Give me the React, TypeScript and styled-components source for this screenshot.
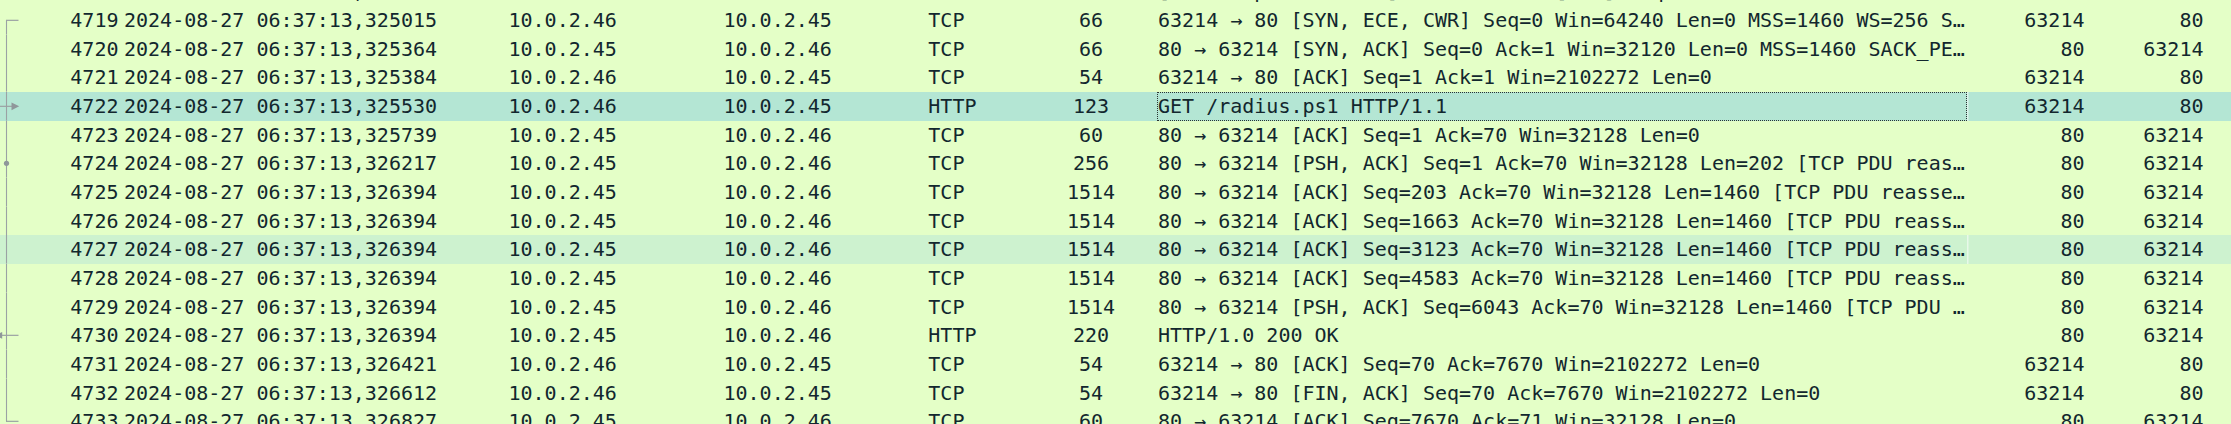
import React from "react";
import styled, { createGlobalStyle, css } from "styled-components";

type Mark = "none" | "start" | "line" | "request" | "related" | "response" | "end";

type Packet = {
  no: number;
  time: string;
  src: string;
  dst: string;
  proto: string;
  len: number;
  info: string;
  sport: number;
  dport: number;
  mark: Mark;
  state?: "selected" | "hover";
};

const ROW_H = 28.667;
const MID = ROW_H / 2;

const packets: Packet[] = [
  { no: 4718, time: "2024-08-27 06:37:13,324911", src: "10.0.2.46", dst: "10.0.2.45", proto: "TCP", len: 54, info: "[TCP Keep-Alive ACK] 63201 → 445 [ACK] Seq=1 Ack=1 Win=1024 Len=0", sport: 63201, dport: 445, mark: "none" },
  { no: 4719, time: "2024-08-27 06:37:13,325015", src: "10.0.2.46", dst: "10.0.2.45", proto: "TCP", len: 66, info: "63214 → 80 [SYN, ECE, CWR] Seq=0 Win=64240 Len=0 MSS=1460 WS=256 S…", sport: 63214, dport: 80, mark: "start" },
  { no: 4720, time: "2024-08-27 06:37:13,325364", src: "10.0.2.45", dst: "10.0.2.46", proto: "TCP", len: 66, info: "80 → 63214 [SYN, ACK] Seq=0 Ack=1 Win=32120 Len=0 MSS=1460 SACK_PE…", sport: 80, dport: 63214, mark: "line" },
  { no: 4721, time: "2024-08-27 06:37:13,325384", src: "10.0.2.46", dst: "10.0.2.45", proto: "TCP", len: 54, info: "63214 → 80 [ACK] Seq=1 Ack=1 Win=2102272 Len=0", sport: 63214, dport: 80, mark: "line" },
  { no: 4722, time: "2024-08-27 06:37:13,325530", src: "10.0.2.46", dst: "10.0.2.45", proto: "HTTP", len: 123, info: "GET /radius.ps1 HTTP/1.1", sport: 63214, dport: 80, mark: "request", state: "selected" },
  { no: 4723, time: "2024-08-27 06:37:13,325739", src: "10.0.2.45", dst: "10.0.2.46", proto: "TCP", len: 60, info: "80 → 63214 [ACK] Seq=1 Ack=70 Win=32128 Len=0", sport: 80, dport: 63214, mark: "line" },
  { no: 4724, time: "2024-08-27 06:37:13,326217", src: "10.0.2.45", dst: "10.0.2.46", proto: "TCP", len: 256, info: "80 → 63214 [PSH, ACK] Seq=1 Ack=70 Win=32128 Len=202 [TCP PDU reas…", sport: 80, dport: 63214, mark: "related" },
  { no: 4725, time: "2024-08-27 06:37:13,326394", src: "10.0.2.45", dst: "10.0.2.46", proto: "TCP", len: 1514, info: "80 → 63214 [ACK] Seq=203 Ack=70 Win=32128 Len=1460 [TCP PDU reasse…", sport: 80, dport: 63214, mark: "line" },
  { no: 4726, time: "2024-08-27 06:37:13,326394", src: "10.0.2.45", dst: "10.0.2.46", proto: "TCP", len: 1514, info: "80 → 63214 [ACK] Seq=1663 Ack=70 Win=32128 Len=1460 [TCP PDU reass…", sport: 80, dport: 63214, mark: "line" },
  { no: 4727, time: "2024-08-27 06:37:13,326394", src: "10.0.2.45", dst: "10.0.2.46", proto: "TCP", len: 1514, info: "80 → 63214 [ACK] Seq=3123 Ack=70 Win=32128 Len=1460 [TCP PDU reass…", sport: 80, dport: 63214, mark: "line", state: "hover" },
  { no: 4728, time: "2024-08-27 06:37:13,326394", src: "10.0.2.45", dst: "10.0.2.46", proto: "TCP", len: 1514, info: "80 → 63214 [ACK] Seq=4583 Ack=70 Win=32128 Len=1460 [TCP PDU reass…", sport: 80, dport: 63214, mark: "line" },
  { no: 4729, time: "2024-08-27 06:37:13,326394", src: "10.0.2.45", dst: "10.0.2.46", proto: "TCP", len: 1514, info: "80 → 63214 [PSH, ACK] Seq=6043 Ack=70 Win=32128 Len=1460 [TCP PDU …", sport: 80, dport: 63214, mark: "line" },
  { no: 4730, time: "2024-08-27 06:37:13,326394", src: "10.0.2.45", dst: "10.0.2.46", proto: "HTTP", len: 220, info: "HTTP/1.0 200 OK", sport: 80, dport: 63214, mark: "response" },
  { no: 4731, time: "2024-08-27 06:37:13,326421", src: "10.0.2.46", dst: "10.0.2.45", proto: "TCP", len: 54, info: "63214 → 80 [ACK] Seq=70 Ack=7670 Win=2102272 Len=0", sport: 63214, dport: 80, mark: "line" },
  { no: 4732, time: "2024-08-27 06:37:13,326612", src: "10.0.2.46", dst: "10.0.2.45", proto: "TCP", len: 54, info: "63214 → 80 [FIN, ACK] Seq=70 Ack=7670 Win=2102272 Len=0", sport: 63214, dport: 80, mark: "line" },
  { no: 4733, time: "2024-08-27 06:37:13,326827", src: "10.0.2.45", dst: "10.0.2.46", proto: "TCP", len: 60, info: "80 → 63214 [ACK] Seq=7670 Ack=71 Win=32128 Len=0", sport: 80, dport: 63214, mark: "end" },
];

const GlobalStyle = createGlobalStyle`
  html, body {
    margin: 0;
    padding: 0;
    background: #e4ffc7;
    overflow: hidden;
  }
`;

const PacketList = styled.div`
  margin-top: -22.667px;
  font-family: "DejaVu Sans Mono", "Liberation Mono", monospace;
  font-size: 20px;
  color: #12272e;
`;

const Row = styled.div<{ $state?: "selected" | "hover" }>`
  display: grid;
  grid-template-columns: 121px 385px 215px 204px 100px 132px 810px 120px 119px 1fr;
  height: ${ROW_H}px;
  line-height: ${ROW_H}px;
  white-space: nowrap;
  background: ${(p) =>
    p.$state === "selected" ? "#b4e6d4" : p.$state === "hover" ? "#cdf2cf" : "#e4ffc7"};
`;

const Cell = styled.div<{ $align?: "left" | "right" | "center"; $pad?: number }>`
  overflow: hidden;
  text-align: ${(p) => p.$align ?? "left"};
  padding-left: ${(p) => (p.$align === "right" ? 0 : p.$pad ?? 0)}px;
  padding-right: ${(p) => (p.$align === "right" ? p.$pad ?? 0 : 0)}px;
`;

const NoCell = styled.div`
  display: flex;
  align-items: stretch;
  padding-right: 2.5px;
`;

const NoText = styled.span`
  flex: 1;
  text-align: right;
`;

const InfoCell = styled.div<{ $focus?: boolean; $split?: boolean }>`
  overflow: hidden;
  border: 1px dotted transparent;
  border-right-width: 0;
  line-height: ${ROW_H - 2}px;
  ${(p) =>
    p.$focus &&
    css`
      border: 1px dotted #2b3433;
      border-bottom-width: 1px;
    `}
  ${(p) =>
    p.$split &&
    css`
      box-shadow: 1.5px 0 0 rgba(255, 255, 255, 0.55);
    `}
`;

const Gutter = styled.svg`
  flex: none;
  display: block;
  width: 20px;
  height: ${ROW_H}px;
  overflow: hidden;
`;

const LINE = "#9ba2a4";

function Relation({ mark }: { mark: Mark }) {
  if (mark === "none") return <Gutter viewBox={`0 0 20 ${ROW_H}`} />;
  const top = mark === "start" ? MID : 0;
  const bottom = mark === "end" ? MID : ROW_H;
  return (
    <Gutter viewBox={`0 0 20 ${ROW_H}`}>
      <line x1={6.5} y1={top} x2={6.5} y2={bottom} stroke={LINE} strokeWidth={1.1} />
      {(mark === "start" || mark === "end") && (
        <line x1={6} y1={MID} x2={18.5} y2={MID} stroke={LINE} strokeWidth={1.2} />
      )}
      {mark === "request" && (
        <>
          <line x1={0} y1={MID} x2={12} y2={MID} stroke={LINE} strokeWidth={1.2} />
          <polygon points={`11.5,${MID - 3.8} 19.2,${MID} 11.5,${MID + 3.8}`} fill="#8f979a" />
        </>
      )}
      {mark === "related" && <circle cx={6.5} cy={MID} r={2.6} fill="#8f979a" />}
      {mark === "response" && (
        <>
          <line x1={0} y1={MID} x2={18.5} y2={MID} stroke={LINE} strokeWidth={1.2} />
          <polygon points={`-5,${MID} 2.2,${MID - 3.4} 2.2,${MID + 3.4}`} fill="#8f979a" />
        </>
      )}
    </Gutter>
  );
}

export default function App() {
  return (
    <>
      <GlobalStyle />
      <PacketList>
        {packets.map((p) => (
          <Row key={p.no} $state={p.state}>
            <NoCell>
              <Relation mark={p.mark} />
              <NoText>{p.no}</NoText>
            </NoCell>
            <Cell $pad={3}>{p.time}</Cell>
            <Cell $pad={2.5}>{p.src}</Cell>
            <Cell $pad={2.5}>{p.dst}</Cell>
            <Cell $pad={3.3}>{p.proto}</Cell>
            <Cell $align="center">{p.len}</Cell>
            <InfoCell $focus={p.state === "selected"} $split={!!p.state}>
              {p.info}
            </InfoCell>
            <Cell $align="right" $pad={2.5}>
              {p.sport}
            </Cell>
            <Cell $align="right" $pad={2.5}>
              {p.dport}
            </Cell>
            <Cell />
          </Row>
        ))}
      </PacketList>
    </>
  );
}
